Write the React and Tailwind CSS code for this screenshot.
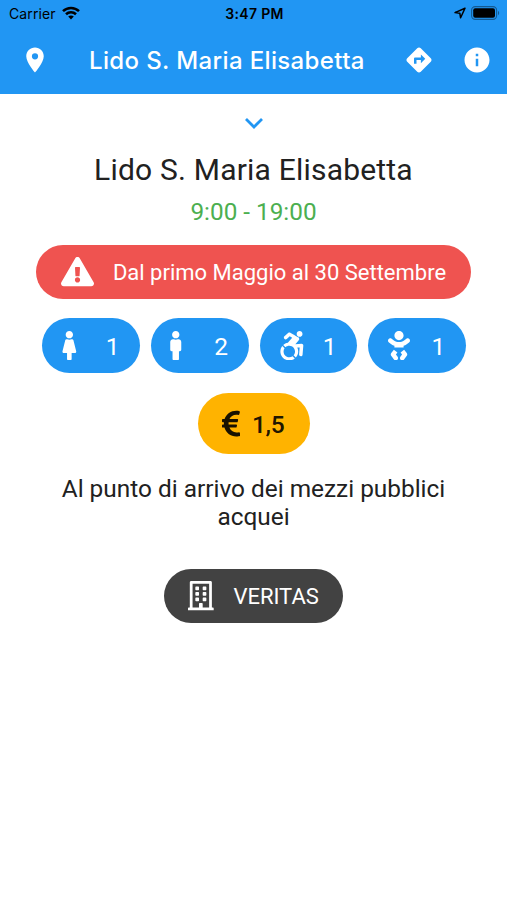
import { MdPlace, MdDirections, MdInfo } from 'react-icons/md';
import {
  FaFemale,
  FaMale,
  FaAccessibleIcon,
  FaBaby,
  FaEuroSign,
  FaRegBuilding,
  FaExclamationTriangle,
} from 'react-icons/fa';

const services = [
  { id: 'female', Icon: FaFemale, width: 'w-[14.7px]', count: 1 },
  { id: 'male', Icon: FaMale, width: 'w-[11.5px]', count: 2 },
  { id: 'accessible', Icon: FaAccessibleIcon, width: 'w-[25.7px]', count: 1 },
  { id: 'baby', Icon: FaBaby, width: 'w-[22px]', count: 1 },
];

function StatusBar() {
  return (
    <div className="grid h-7 grid-cols-3 items-center pl-[9px] pr-[7px] font-['Inter',sans-serif] text-black">
      <div className="flex items-center gap-[6px]">
        <span className="text-[14px] leading-5 tracking-[0.1px]">Carrier</span>
        <svg viewBox="0 0 18 14" className="-mt-[2px] h-[14px] w-[18px]" fill="none" stroke="currentColor" strokeWidth="2.6">
          <path d="M1 5.1C5.5 0.9 12.5 0.9 17 5.1" />
          <path d="M4 8.2C6.8 5.6 11.2 5.6 14 8.2" />
          <path d="M9 13.4L6.2 10.5C7.8 9 10.2 9 11.8 10.5Z" fill="currentColor" stroke="none" />
        </svg>
      </div>
      <span className="text-center text-[14px] font-semibold leading-5 tracking-[0.35px]">3:47 PM</span>
      <div className="-mt-[2px] flex items-center justify-end gap-[5px]">
        <svg viewBox="0 0 12 12" className="size-3" fill="none" stroke="currentColor" strokeWidth="1.5" strokeLinejoin="round">
          <path d="M11 1.2L1 5.6L5.8 6.2L6.6 10.8Z" />
        </svg>
        <svg viewBox="0 0 29 14" className="h-[14px] w-[29px]">
          <rect x="0.6" y="0.6" width="25" height="12.8" rx="3.6" fill="none" stroke="#000" strokeOpacity="0.4" strokeWidth="1.1" />
          <rect x="2.2" y="2.3" width="21.8" height="9.4" rx="2" fill="#000" />
          <path d="M27 4.8C28.6 5.5 28.6 8.5 27 9.2Z" fill="#000" fillOpacity="0.4" />
        </svg>
      </div>
    </div>
  );
}

function AppBar() {
  return (
    <header className="h-[94px] bg-[#2196f3]">
      <StatusBar />
      <div className="flex h-[64px] items-center justify-between pl-5 pr-[15px] text-white">
        <MdPlace className="size-[30px]" />
        <h1 className="ml-[39px] mr-auto whitespace-nowrap pt-px font-['Inter',sans-serif] text-[24px] font-medium tracking-[0.37px]">
          Lido S. Maria Elisabetta
        </h1>
        <MdDirections className="mr-7 size-[30px]" />
        <MdInfo className="size-[30px]" />
      </div>
    </header>
  );
}

function ServicePill({ Icon, width, count }) {
  return (
    <div className="flex h-[55px] w-[97.6px] items-center justify-between rounded-full bg-[#2196f3] pl-[19.5px] pr-[20.5px] text-white">
      <Icon className={`h-[29.4px] ${width}`} />
      <span className="pt-[3px] text-[24.5px]">{count}</span>
    </div>
  );
}

export default function App() {
  return (
    <div className="min-h-screen bg-white font-['Roboto',sans-serif] text-[#212121]">
      <AppBar />
      <main className="flex flex-col items-center">
        <svg viewBox="0 0 30 30" className="ml-px mt-[14px] size-[30px] text-[#2196f3]" fill="none" stroke="currentColor" strokeWidth="2.8">
          <path d="M7 11L15 19L23 11" />
        </svg>
        <h2 className="mt-[14px] text-[30px] leading-[36px] tracking-[0.2px]">Lido S. Maria Elisabetta</h2>
        <p className="mt-[9px] text-[24.3px] leading-[30px] text-[#4caf50]">9:00 - 19:00</p>

        <div className="mt-[18px] flex h-[54px] items-center rounded-full bg-[#ef5350] px-[24.5px] text-white">
          <FaExclamationTriangle className="h-[29.4px] w-[33px]" />
          <span className="ml-[19px] pt-px text-[22px]">Dal primo Maggio al 30 Settembre</span>
        </div>

        <div className="ml-px mt-[19.3px] flex gap-[11px]">
          {services.map(({ id, Icon, width, count }) => (
            <ServicePill key={id} Icon={Icon} width={width} count={count} />
          ))}
        </div>

        <div className="mt-[19.7px] flex h-[61px] w-[112px] items-center rounded-full bg-[#ffb300] pl-[24px] text-black/90">
          <FaEuroSign className="h-[29.4px] w-[18.4px]" />
          <span className="ml-[12px] pt-[3px] text-[24.5px] font-medium tracking-[-0.3px]">1,5</span>
        </div>

        <p className="mt-[21px] w-[410px] text-center text-[24.4px] leading-[28px]">
          Al punto di arrivo dei mezzi pubblici acquei
        </p>

        <div className="mt-[38px] flex h-[54px] items-center rounded-full bg-[#424242] px-[24.5px] text-white">
          <FaRegBuilding className="h-[29.4px] w-[25.7px]" />
          <span className="ml-[19.5px] pt-px text-[22px]">VERITAS</span>
        </div>
      </main>
    </div>
  );
}
